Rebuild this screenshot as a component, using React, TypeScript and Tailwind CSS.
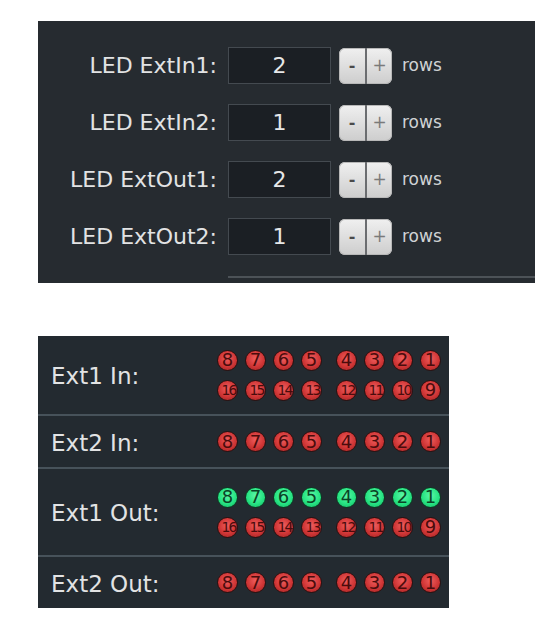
import React from 'react';

const font = { fontFamily: '"DejaVu Sans", Verdana, sans-serif' };

interface RowSetting {
  label: string;
  value: number;
}

const settings: RowSetting[] = [
  { label: 'LED ExtIn1:', value: 2 },
  { label: 'LED ExtIn2:', value: 1 },
  { label: 'LED ExtOut1:', value: 2 },
  { label: 'LED ExtOut2:', value: 1 },
];

const Stepper: React.FC = () => (
  <div className="ml-[8px] flex h-[36px] w-[53px] overflow-hidden rounded-[6px] bg-gradient-to-b from-[#f0f0f0] to-[#cdcdcd] shadow-[inset_0_0_0_1px_#b8b8b8]">
    <button className="flex w-[26px] items-center justify-center text-[16px] font-bold leading-none text-[#4a4a4a]">-</button>
    <div className="w-[2px] bg-[#6b6d70]" />
    <button className="flex flex-1 items-center justify-center text-[17px] leading-none text-[#7a7a7a]">+</button>
  </div>
);

const Led: React.FC<{ n: number; on?: boolean }> = ({ n, on }) => {
  const two = n > 9;
  return (
    <div
      className={
        'flex h-[21px] w-[21px] items-center justify-center rounded-full border leading-none ' +
        (on
          ? 'border-[#0d3a22] bg-[radial-gradient(circle_at_50%_40%,#5cf7a6,#27e483_55%,#12b262)] text-[#0b4326]'
          : 'border-[#2c0f0f] bg-[radial-gradient(circle_at_50%_40%,#ee5c5c,#d03636_55%,#9a2222)] text-[#4a0c0c]') +
        (two ? ' text-[14px] tracking-[-2px]' : ' text-[18px]')
      }
    >
      <span className={two ? 'mr-[-2px]' : ''}>{n}</span>
    </div>
  );
};

const LedLine: React.FC<{ start: number; on?: boolean }> = ({ start, on }) => {
  const nums = [7, 6, 5, 4, 3, 2, 1, 0].map((i) => start + i);
  return (
    <div className="flex gap-[14px]">
      <div className="flex gap-[7px]">
        {nums.slice(0, 4).map((n) => (
          <Led key={n} n={n} on={on} />
        ))}
      </div>
      <div className="flex gap-[7px]">
        {nums.slice(4).map((n) => (
          <Led key={n} n={n} on={on} />
        ))}
      </div>
    </div>
  );
};

interface StatusRow {
  label: string;
  lines: { start: number; on?: boolean }[];
  h: string;
}

const statusRows: StatusRow[] = [
  { label: 'Ext1 In:', lines: [{ start: 1 }, { start: 9 }], h: 'h-[80px]' },
  { label: 'Ext2 In:', lines: [{ start: 1 }], h: 'h-[53px]' },
  { label: 'Ext1 Out:', lines: [{ start: 1, on: true }, { start: 9 }], h: 'h-[88px]' },
  { label: 'Ext2 Out:', lines: [{ start: 1 }], h: 'h-[51px]' },
];

export default function App() {
  return (
    <div className="min-h-[638px] w-[558px] bg-white pl-[38px] pt-[21px]" style={font}>
      {/* LED row settings */}
      <div className="flex h-[262px] w-[497px] flex-col bg-[#262b30] pt-[26px]">
        <div className="flex flex-col gap-[20px]">
          {settings.map((s) => (
            <div key={s.label} className="flex items-center">
              <div className="w-[190px] pr-[11px] text-right text-[22px] leading-none text-[#e2e3e4]">{s.label}</div>
              <div className="flex h-[37px] w-[103px] items-center justify-center border border-[#444a50] bg-[#1b1f24] text-[22px] text-[#e6e7e8]">
                {s.value}
              </div>
              <Stepper />
              <span className="ml-[10px] text-[17px] text-[#cfd2d4]">rows</span>
            </div>
          ))}
        </div>
        <div className="mb-[5px] ml-[190px] mt-auto h-[2px] bg-[#4c5257]" />
      </div>

      {/* LED status */}
      <div className="mt-[53px] w-[411px] divide-y-2 divide-[#47525a] bg-[#232a30]">
        {statusRows.map((r) => (
          <div key={r.label} className={'flex items-center ' + r.h}>
            <div className="w-[179px] pl-[13px] pt-[3px] text-[23px] leading-none text-[#e2e3e4]">{r.label}</div>
            <div className="flex flex-col gap-[9px]">
              {r.lines.map((l) => (
                <LedLine key={l.start} start={l.start} on={l.on} />
              ))}
            </div>
          </div>
        ))}
      </div>
    </div>
  );
}
